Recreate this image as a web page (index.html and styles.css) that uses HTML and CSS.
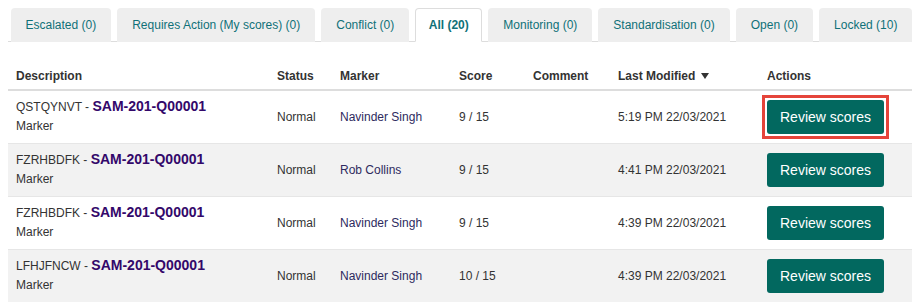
FILE: index.html
```html
<!DOCTYPE html>
<html lang="en">
<head>
    <meta charset="UTF-8">
    <meta name="viewport" content="width=device-width, initial-scale=1.0">
    <title>Scores</title>
    <link rel="stylesheet" href="styles.css">
</head>
<body>
    <ul class="tabs">
        <li class="tab">Escalated (0)</li>
        <li class="tab">Requires Action (My scores) (0)</li>
        <li class="tab">Conflict (0)</li>
        <li class="tab active">All (20)</li>
        <li class="tab">Monitoring (0)</li>
        <li class="tab">Standardisation (0)</li>
        <li class="tab">Open (0)</li>
        <li class="tab">Locked (10)</li>
    </ul>
    <table class="scores">
        <colgroup>
            <col class="c-desc">
            <col class="c-status">
            <col class="c-marker">
            <col class="c-score">
            <col class="c-comment">
            <col class="c-modified">
            <col>
        </colgroup>
        <thead>
            <tr>
                <th>Description</th>
                <th>Status</th>
                <th>Marker</th>
                <th>Score</th>
                <th>Comment</th>
                <th>Last Modified <svg class="sort" width="8" height="6" viewBox="0 0 8 6"><path d="M0 0H8L4 6Z" fill="#333"/></svg></th>
                <th>Actions</th>
            </tr>
        </thead>
        <tbody>
            <tr>
                <td><div class="title">QSTQYNVT - <a class="item" href="#">SAM-201-Q00001</a></div><div class="role">Marker</div></td>
                <td>Normal</td>
                <td class="marker">Navinder Singh</td>
                <td>9 / 15</td>
                <td></td>
                <td>5:19 PM 22/03/2021</td>
                <td><button class="review focused">Review scores</button></td>
            </tr>
            <tr>
                <td><div class="title">FZRHBDFK - <a class="item" href="#">SAM-201-Q00001</a></div><div class="role">Marker</div></td>
                <td>Normal</td>
                <td class="marker">Rob Collins</td>
                <td>9 / 15</td>
                <td></td>
                <td>4:41 PM 22/03/2021</td>
                <td><button class="review">Review scores</button></td>
            </tr>
            <tr>
                <td><div class="title">FZRHBDFK - <a class="item" href="#">SAM-201-Q00001</a></div><div class="role">Marker</div></td>
                <td>Normal</td>
                <td class="marker">Navinder Singh</td>
                <td>9 / 15</td>
                <td></td>
                <td>4:39 PM 22/03/2021</td>
                <td><button class="review">Review scores</button></td>
            </tr>
            <tr>
                <td><div class="title">LFHJFNCW - <a class="item" href="#">SAM-201-Q00001</a></div><div class="role">Marker</div></td>
                <td>Normal</td>
                <td class="marker">Navinder Singh</td>
                <td>10 / 15</td>
                <td></td>
                <td>4:39 PM 22/03/2021</td>
                <td><button class="review">Review scores</button></td>
            </tr>
        </tbody>
    </table>
</body>
</html>
```

FILE: styles.css
```css
* {
    margin: 0;
    padding: 0;
    box-sizing: border-box;
}
body {
    font-family: "Liberation Sans", Arial, sans-serif;
    font-size: 12px;
    color: #333;
    background: white;
    padding: 8px 0 0 8px;
    overflow: hidden;
}
.tabs {
    list-style: none;
    display: flex;
    gap: 6px;
    padding-left: 2.5px;
    border-bottom: 1px solid #ddd;
    width: 920px;
}
.tab {
    padding: 8px 14px;
    line-height: 16px;
    background: #eee;
    color: #0f7178;
    border: 1px solid transparent;
    border-radius: 4px 4px 0 0;
    margin-bottom: -1px;
    white-space: nowrap;
}
.tab.active {
    padding: 8px 12.5px;
    background: white;
    border-color: #ddd;
    border-bottom-color: white;
    font-weight: bold;
}
.scores {
    width: 904px;
    margin-top: 16px;
    border-collapse: collapse;
    table-layout: fixed;
}
.c-desc { width: 261px; }
.c-status { width: 63px; }
.c-marker { width: 119px; }
.c-score { width: 74px; }
.c-comment { width: 85px; }
.c-modified { width: 149px; }
th {
    text-align: left;
    font-weight: bold;
    line-height: 17px;
    padding: 10px 8px 4px;
    border-bottom: 2px solid #ddd;
    white-space: nowrap;
}
.sort {
    margin-left: 2px;
    vertical-align: 1px;
}
td {
    padding: 7px 8px;
    line-height: 19px;
    vertical-align: middle;
    white-space: nowrap;
}
.title {
    height: 19px;
}
tbody tr {
    border-top: 1px solid #e6e6e6;
}
tbody tr:nth-child(even) {
    background: #f2f2f2;
}
tbody tr:first-child {
    border-top: none;
}
.item {
    font-size: 14px;
    line-height: 16px;
    font-weight: bold;
    color: #33086a;
    text-decoration: none;
}
.marker {
    color: #2e2a5e;
}
.review {
    position: relative;
    font-family: inherit;
    font-size: 14px;
    line-height: 16px;
    padding: 9px 13px;
    border: none;
    border-radius: 3px;
    background: #02685f;
    color: white;
    cursor: pointer;
}
.review.focused::after {
    content: "";
    position: absolute;
    inset: -5px;
    border: 3px solid #e5443a;
}
```
